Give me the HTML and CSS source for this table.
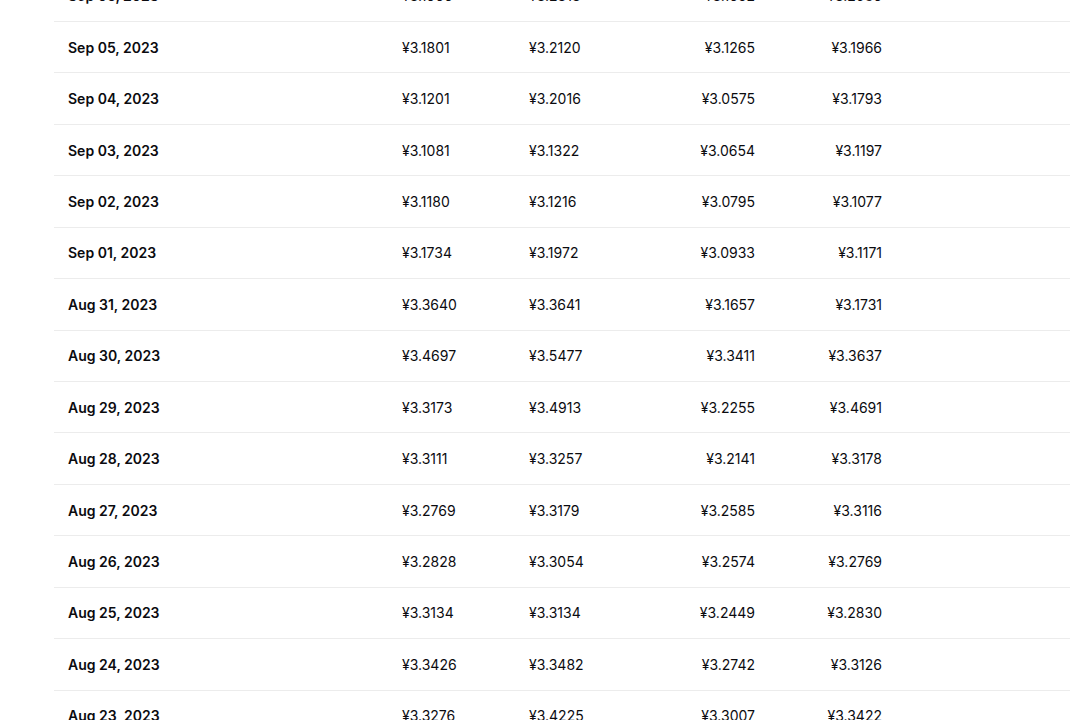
FILE: index.html
```html
<!DOCTYPE html>
<html lang="en">
<head>
<meta charset="utf-8">
<title>Historical prices</title>
<link rel="stylesheet" href="styles.css">
</head>
<body>
<div class="page">
  <table class="prices">
    <colgroup>
      <col class="c-date"><col class="c-num"><col class="c-num"><col class="c-num"><col class="c-num"><col>
    </colgroup>
    <tbody>
      <tr><td class="date">Sep 06, 2023</td><td>¥3.1966</td><td>¥3.2313</td><td class="r">¥3.1652</td><td class="r">¥3.2086</td><td></td></tr>
      <tr><td class="date">Sep 05, 2023</td><td>¥3.1801</td><td>¥3.2120</td><td class="r">¥3.1265</td><td class="r">¥3.1966</td><td></td></tr>
      <tr><td class="date">Sep 04, 2023</td><td>¥3.1201</td><td>¥3.2016</td><td class="r">¥3.0575</td><td class="r">¥3.1793</td><td></td></tr>
      <tr><td class="date">Sep 03, 2023</td><td>¥3.1081</td><td>¥3.1322</td><td class="r">¥3.0654</td><td class="r">¥3.1197</td><td></td></tr>
      <tr><td class="date">Sep 02, 2023</td><td>¥3.1180</td><td>¥3.1216</td><td class="r">¥3.0795</td><td class="r">¥3.1077</td><td></td></tr>
      <tr><td class="date">Sep 01, 2023</td><td>¥3.1734</td><td>¥3.1972</td><td class="r">¥3.0933</td><td class="r">¥3.1171</td><td></td></tr>
      <tr><td class="date">Aug 31, 2023</td><td>¥3.3640</td><td>¥3.3641</td><td class="r">¥3.1657</td><td class="r">¥3.1731</td><td></td></tr>
      <tr><td class="date">Aug 30, 2023</td><td>¥3.4697</td><td>¥3.5477</td><td class="r">¥3.3411</td><td class="r">¥3.3637</td><td></td></tr>
      <tr><td class="date">Aug 29, 2023</td><td>¥3.3173</td><td>¥3.4913</td><td class="r">¥3.2255</td><td class="r">¥3.4691</td><td></td></tr>
      <tr><td class="date">Aug 28, 2023</td><td>¥3.3111</td><td>¥3.3257</td><td class="r">¥3.2141</td><td class="r">¥3.3178</td><td></td></tr>
      <tr><td class="date">Aug 27, 2023</td><td>¥3.2769</td><td>¥3.3179</td><td class="r">¥3.2585</td><td class="r">¥3.3116</td><td></td></tr>
      <tr><td class="date">Aug 26, 2023</td><td>¥3.2828</td><td>¥3.3054</td><td class="r">¥3.2574</td><td class="r">¥3.2769</td><td></td></tr>
      <tr><td class="date">Aug 25, 2023</td><td>¥3.3134</td><td>¥3.3134</td><td class="r">¥3.2449</td><td class="r">¥3.2830</td><td></td></tr>
      <tr><td class="date">Aug 24, 2023</td><td>¥3.3426</td><td>¥3.3482</td><td class="r">¥3.2742</td><td class="r">¥3.3126</td><td></td></tr>
      <tr><td class="date">Aug 23, 2023</td><td>¥3.3276</td><td>¥3.4225</td><td class="r">¥3.3007</td><td class="r">¥3.3422</td><td></td></tr>
      <tr><td class="date">Aug 22, 2023</td><td>¥3.3512</td><td>¥3.3790</td><td class="r">¥3.2904</td><td class="r">¥3.3276</td><td></td></tr>
    </tbody>
  </table>
</div>
</body>
</html>
```

FILE: styles.css
```css
html, body {
  margin: 0;
  padding: 0;
  background: #ffffff;
  overflow: hidden;
}

.page {
  margin-top: -29.5px;
  padding-left: 54px;
  font-family: Inter, "Noto Sans", "Liberation Sans", sans-serif;
  font-size: 14px;
  color: #0b0b0f;
}

.prices {
  width: 1030px;
  border-collapse: collapse;
  table-layout: fixed;
}

.c-date { width: 334px; }
.c-num { width: 127px; }

.prices td {
  padding: 15.73px 14px 14.73px;
  line-height: 20px;
  border-bottom: 1px solid #ececec;
  white-space: nowrap;
  text-align: left;
  vertical-align: middle;
}

.prices td.date {
  font-weight: 600;
}

.prices td.r {
  text-align: right;
}
```
